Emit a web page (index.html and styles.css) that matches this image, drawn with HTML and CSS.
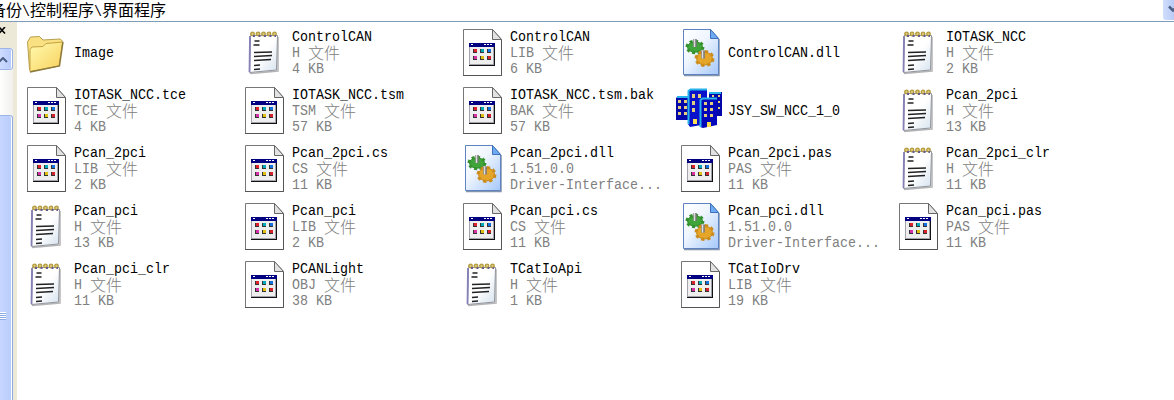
FILE: index.html
```html
<!DOCTYPE html>
<html lang="zh-CN">
<head>
  <meta charset="UTF-8">
  <title>界面程序</title>
  <link rel="stylesheet" href="styles.css">
</head>
<body>
  <svg class="defs" width="0" height="0">
    <defs>
      <linearGradient id="gFolder" x1="0" y1="0" x2="1" y2="1"><stop offset="0" stop-color="#fffbb0"/><stop offset="1" stop-color="#f8d05c"/></linearGradient>
      <linearGradient id="gDll" x1="0" y1="0" x2="1" y2="1"><stop offset="0" stop-color="#fff"/><stop offset="0.4" stop-color="#f0f6ff"/><stop offset="1" stop-color="#a5c8fa"/></linearGradient>
      <linearGradient id="gNote" x1="0" y1="0" x2="1" y2="1"><stop offset="0.5" stop-color="#fff"/><stop offset="1" stop-color="#d5e2ee"/></linearGradient>
    </defs>
    <symbol id="folder" viewBox="0 0 48 48">
      <path d="M7.500 40 5.500 13l3-5 9-.5 3.500 3.500 17-1 2.500 2-4 25-28 5z" fill="#f9e183" stroke="#b8a04e"/>
      <path d="M8 20.500 10 18l11-.5 3-3 16.500-1.500-3.500 24-29 5.500z" fill="url(#gFolder)" stroke="#c4a140"/>
      <path d="M8 43 37.500 37 41 13" fill="none" stroke="#8c7a3c" stroke-width="1.400"/>
    </symbol>
    <symbol id="note" viewBox="0 0 48 48">
      <path d="M10 44.500 38 42V8" fill="none" stroke="#b5b5b5" stroke-width="1.500"/>
      <path d="M10.500 6.500h27l-1 34.500-27 2.500z" fill="url(#gNote)" stroke="#90939e"/>
      <path d="M10 7 9.500 43" stroke="#8580b5" stroke-width="1.800"/>
      <path d="M14.500 12h5M13.500 16h6M14 23.500l18-.5M14 27.500l18-1M14 31.500l17-1M14 36.500l6-.5M14 40.500l6-.5" stroke="#222" stroke-width="1.300"/>
      <g fill="#d9c77c" stroke="#b39a3c" stroke-width="1.300"><circle cx="12.500" cy="5" r="1.800"/><circle cx="18" cy="5" r="1.800"/><circle cx="23.500" cy="5" r="1.800"/><circle cx="29" cy="5" r="1.800"/><circle cx="34.500" cy="5" r="1.800"/></g>
      <path d="M13 7h2m3.500 0h2m3.500 0h2m3.500 0h2m3 0h1.500" stroke="#655c91" stroke-width="1.800"/>
    </symbol>
    <symbol id="page" viewBox="0 0 48 48">
      <path d="M5.500 .5h29l9 10v36h-38z" fill="#fff" stroke="#777"/>
      <path d="M34.500 .5v10h9z" fill="#e2e2e2" stroke="#666"/>
      <path d="M43.500 11v35.500H5" fill="none" stroke="#555"/>
      <g shape-rendering="crispEdges">
        <path d="M11 14h26v23H11z" fill="#111"/>
        <path d="M11 14h25v22H11z" fill="#a3a3ad"/>
        <path d="M12 18h23v17H12z" fill="#eee"/>
        <path d="M11 14h26v4H11z" fill="#000080"/>
        <path d="M13 15h2v1h-2zM26 15h2v1h-2zM29 15h2v1h-2zM32 15h2v1h-2z" fill="#fff"/>
        <path d="M15 20h4v4h-4zM22 20h4v4h-4zM29 20h4v4h-4zM15 27h4v4h-4zM22 27h4v4h-4zM29 27h4v4h-4z" fill="#333"/>
        <path d="M16 20h3v3h-3z" fill="#e0202a"/>
        <path d="M23 20h3v3h-3z" fill="#0ab"/><path d="M30 20h3v3h-3z" fill="#1570e0"/>
        <path d="M16 27h3v3h-3z" fill="#d830a8"/><path d="M23 27h3v3h-3z" fill="#e0c010"/>
        <path d="M30 27h3v3h-3z" fill="#d8202a"/>
      </g>
    </symbol>
    <symbol id="dll" viewBox="0 0 48 48">
      <path d="M8 46.500h35V10" fill="none" stroke="#8494ac" stroke-width="1.500"/>
      <path d="M7.500 .5h27l8 9v36h-35z" fill="url(#gDll)" stroke="#5f83c0"/>
      <path d="M34.500 .5v9h8z" fill="#6fabf2" stroke="#3f70bc"/>
      <g fill="#3fa43a" stroke="#34902d">
        <ellipse cx="19" cy="18" rx="7.500" ry="5.200"/>
        <ellipse cx="19" cy="18" rx="8" ry="5.800" fill="none" stroke-width="3" stroke-dasharray="2.900 2.500"/>
      </g>
      <g fill="#e4a528" stroke="#cc8c1c">
        <ellipse cx="28.500" cy="29.500" rx="8" ry="6.500"/>
        <ellipse cx="28.500" cy="29.500" rx="8.500" ry="7" fill="none" stroke-width="3" stroke-dasharray="3.300 2.800"/>
      </g>
      <path d="M19 10v8M27 21.500v8" stroke="#777" stroke-width="3.500"/>
      <path d="M18.500 10v8M26.500 21.500v8" stroke="#ddd" stroke-width="1.500"/>
    </symbol>
    <symbol id="city" viewBox="0 0 48 48">
      <path d="M0 11 2 9h11v24H0z" fill="#0508a8"/>
      <path d="M33 7 35 5h11v24H33z" fill="#0508a8"/>
      <path d="M12 5 14 2h17v35l-17 3-2-3z" fill="#0912ca"/>
      <path d="M24 13 26 11h15v27l-14 3-3-1z" fill="#0508ba"/>
      <path d="M1 10h11M33 6h12M12.500 37V4l2-1.500H31M24.500 40V13l2-1.500H41" fill="none" stroke="#27b4ee" stroke-width="2"/>
      <path d="M2 13h3v3H2zM8 13h3v3H8zM2 19h3v3H2zM8 19h3v3H8zM2 25h3v3H2zM8 25h3v3H8zM16 7h3v4h-3zM22 7h3v4h-3zM16 14h3v4h-3zM16 21h3v4h-3zM28 15h3v3h-3zM34 15h3v3h-3zM28 21h3v3h-3zM34 21h3v3h-3zM28 27h3v3h-3zM34 27h3v3h-3zM36 8h2v2h-2zM42 8h2v2h-2zM42 14h2v2h-2zM42 20h2v2h-2z" fill="#e4cf7c"/>
      <path d="M17 32h4v5h-4zM31 35h4v5h-4z" fill="#ffe050"/>
    </symbol>
  </svg>

  <div class="address">
    <span class="path">备份<i>\</i>控制程序<i>\</i>界面程序</span>
    <div class="drop"><svg width="10" height="8" viewBox="0 0 10 8"><path d="M1 1.500l4 4 4-4" fill="none" stroke="#4d6185" stroke-width="2.500"/></svg></div>
  </div>
  <div class="main">
    <div class="side">
      <div class="side-head"><svg width="6" height="7" viewBox="0 0 6 7"><path d="M-1 0l6 6.500M-1 6.500l6-6.500" stroke="#000" stroke-width="1.600"/></svg></div>
      <div class="scroll">
        <div class="up"><svg width="8" height="6" viewBox="0 0 8 6"><path d="M-1 5l4-4 4 4" fill="none" stroke="#4d6185" stroke-width="2"/></svg></div>
        <div class="track"></div>
        <div class="thumb"><div class="grip"></div></div>
      </div>
    </div>
    <div class="files" id="files"></div>
  </div>
  <script src="files.js"></script>
</body>
</html>
```
FILE: styles.css
```css
body { margin: 0; width: 1174px; height: 400px; overflow: hidden; background: #fff; color: #000; display: flex; flex-direction: column; font: 13.333px/16px "Liberation Mono", "Noto Sans CJK SC", monospace; }
.defs { position: absolute; }
.address { flex: none; height: 21px; border-bottom: 1px solid #7f9db9; display: flex; justify-content: space-between; overflow: hidden; }
.path { margin-left: -10px; font: 16px/18px "Noto Sans CJK SC", sans-serif; white-space: nowrap; }
.path i { display: inline-block; font: 13.333px/16px "Liberation Mono", monospace; transform: scaleY(1.15); }
.drop { width: 11px; height: 20px; background: linear-gradient(90deg, #d0ddfc, #b9cbf6); border-radius: 0 0 0 3px; overflow: hidden; }
.drop svg { display: block; margin: 5px 0 0 5px; }
.main { flex: 1; display: flex; min-height: 0; }
.side { width: 17px; flex: none; display: flex; flex-direction: column; background: #ece9d8; }
.side-head { height: 26px; }
.side-head svg { display: block; margin-top: 5px; }
.scroll { flex: 1; width: 13px; display: flex; flex-direction: column; background: #f8f8f6; }
.up { height: 22px; box-sizing: border-box; border: 1px solid #9db5e6; border-left: 0; border-radius: 0 3px 3px 0; background: linear-gradient(90deg, #cddcff, #b6cafa); box-shadow: inset -1px 0 #fff; }
.up svg { display: block; margin-top: 8px; }
.track { height: 45px; background: linear-gradient(90deg, #fefefe, #f1f0ec); }
.thumb { flex: 1; border-right: 1px solid #8da9dd; border-top: 1px solid #9db5e6; border-radius: 0 3px 0 0; background: linear-gradient(90deg, #c6d6fe, #b8ccfb); box-shadow: inset -1px 0 #fff; }
.grip { width: 6px; height: 8px; margin-top: 196px; background: repeating-linear-gradient(#fff 0 1px, #8fabe8 1px 2px); }
.files { flex: 1; display: grid; grid-template-columns: repeat(5, 218px); grid-auto-rows: 58px; align-content: start; padding: 2px 0 0 5px; }
.file { display: flex; align-items: center; white-space: nowrap; }
.icon { width: 48px; height: 48px; flex: none; margin-right: 4px; }
.text { padding-top: 2px; }
.name, .info { height: 16px; white-space: pre; display: flex; }
.name span, .info span { transform: scaleY(1.15); }
.info { color: #808080; }
.info .zh { font: 300 16px/12px "Noto Sans CJK SC", sans-serif; transform: none; }
```
FILE: files.js
```js
const files = [
  ['folder', 'Image'],
  ['note', 'ControlCAN', 'H 文件', '4 KB'],
  ['page', 'ControlCAN', 'LIB 文件', '6 KB'],
  ['dll', 'ControlCAN.dll'],
  ['note', 'IOTASK_NCC', 'H 文件', '2 KB'],
  ['page', 'IOTASK_NCC.tce', 'TCE 文件', '4 KB'],
  ['page', 'IOTASK_NCC.tsm', 'TSM 文件', '57 KB'],
  ['page', 'IOTASK_NCC.tsm.bak', 'BAK 文件', '57 KB'],
  ['city', 'JSY_SW_NCC_1_0'],
  ['note', 'Pcan_2pci', 'H 文件', '13 KB'],
  ['page', 'Pcan_2pci', 'LIB 文件', '2 KB'],
  ['page', 'Pcan_2pci.cs', 'CS 文件', '11 KB'],
  ['dll', 'Pcan_2pci.dll', '1.51.0.0', 'Driver-Interface...'],
  ['page', 'Pcan_2pci.pas', 'PAS 文件', '11 KB'],
  ['note', 'Pcan_2pci_clr', 'H 文件', '11 KB'],
  ['note', 'Pcan_pci', 'H 文件', '13 KB'],
  ['page', 'Pcan_pci', 'LIB 文件', '2 KB'],
  ['page', 'Pcan_pci.cs', 'CS 文件', '11 KB'],
  ['dll', 'Pcan_pci.dll', '1.51.0.0', 'Driver-Interface...'],
  ['page', 'Pcan_pci.pas', 'PAS 文件', '11 KB'],
  ['note', 'Pcan_pci_clr', 'H 文件', '11 KB'],
  ['page', 'PCANLight', 'OBJ 文件', '38 KB'],
  ['note', 'TCatIoApi', 'H 文件', '1 KB'],
  ['page', 'TCatIoDrv', 'LIB 文件', '19 KB']
];

document.getElementById('files').innerHTML = files.map(([icon, name, ...info]) => `
  <div class="file">
    <svg class="icon"><use href="#${icon}"/></svg>
    <div class="text">
      <div class="name"><span>${name}</span></div>
      ${info.map(t => `<div class="info"><span>${t.replace('文件', '</span><span class="zh">文件')}</span></div>`).join('')}
    </div>
  </div>`).join('');
```
